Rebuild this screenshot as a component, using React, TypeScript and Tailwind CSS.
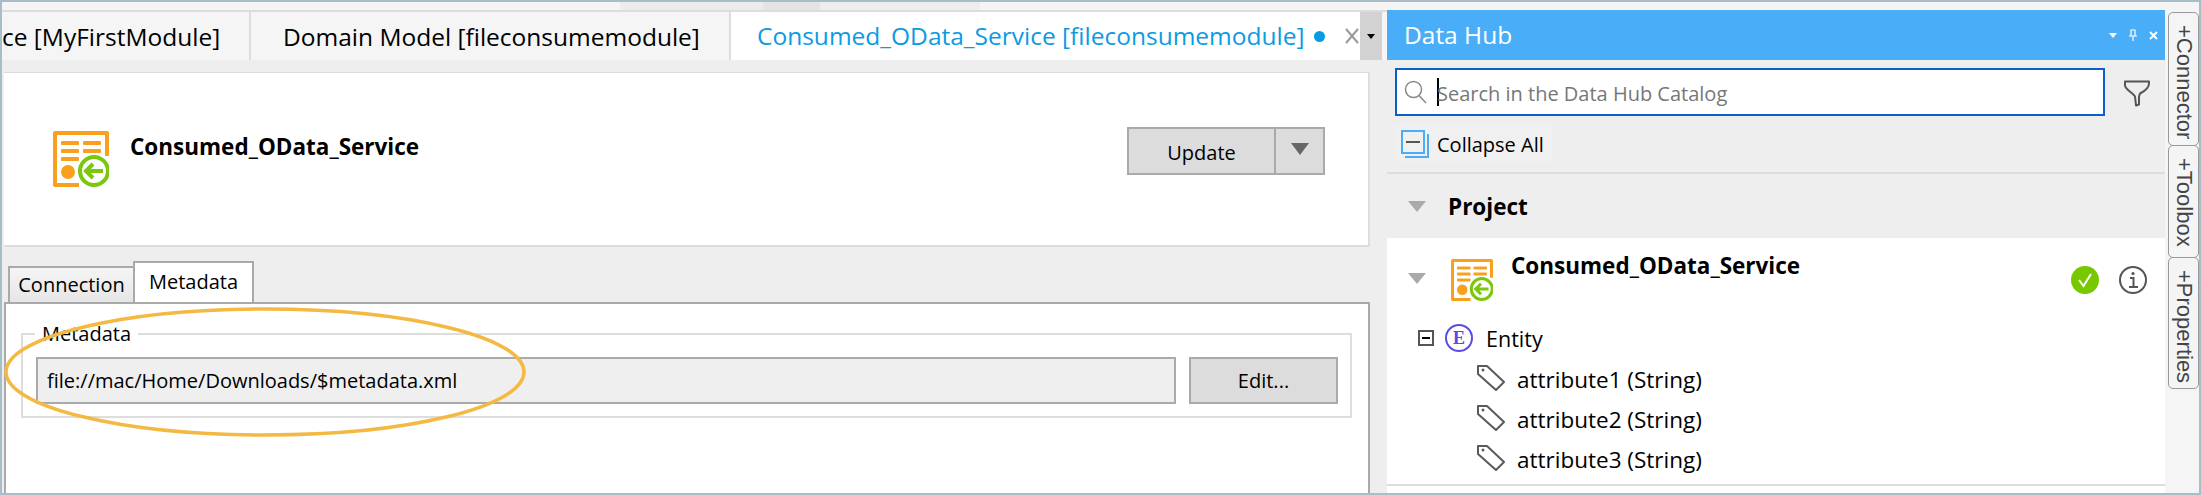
const SANS = "font-['Open_Sans','Noto_Sans',sans-serif]";

function ServiceIcon({ size }: { size: number }) {
  return (
    <svg width={size} height={size} viewBox="0 0 56 56" className="shrink-0">
      <path d="M2 25V2h52v23M26 54H2V2" fill="none" stroke="#f9a11f" strokeWidth="4" strokeLinejoin="round" />
      <g fill="#f9a11f">
        <rect x="8" y="10" width="18" height="4" rx="1" />
        <rect x="30" y="10" width="18" height="4" rx="1" />
        <rect x="8" y="18" width="18" height="4" rx="1" />
        <rect x="30" y="18" width="18" height="4" rx="1" />
        <rect x="8" y="26" width="18" height="4" rx="1" />
        <circle cx="15" cy="41" r="7" />
      </g>
      <circle cx="41" cy="40" r="14" fill="#fff" stroke="#7ac70c" strokeWidth="4" />
      <path d="M50 40H33M40 33l-7 7 7 7" fill="none" stroke="#7ac70c" strokeWidth="4" />
    </svg>
  );
}

function Triangle() {
  return (
    <svg width="18" height="11" viewBox="0 0 18 11" className="shrink-0">
      <path d="M0 0h18L9 11z" fill="#aaa" />
    </svg>
  );
}

function TagIcon() {
  return (
    <svg width="28" height="26" viewBox="0 0 28 26" className="shrink-0">
      <path d="M1 1h9l17 16-8 8L1 9z" fill="none" stroke="#5a5a5a" strokeWidth="2" strokeLinejoin="round" />
      <circle cx="6" cy="5" r="1.5" fill="#5a5a5a" />
    </svg>
  );
}

function SideTab({ label, h }: { label: string; h: string }) {
  return (
    <div className={`${h} w-[31px] rounded-[5px] border border-[#999] bg-[#f5f5f5] flex justify-center pt-[12px] -mb-px`}>
      <span className="[writing-mode:vertical-rl] font-['Liberation_Sans',sans-serif] text-[22px] leading-[30px] text-[#444]">{label}</span>
    </div>
  );
}

function AttrRow({ label }: { label: string }) {
  return (
    <div className="flex h-[40px] items-center gap-[12px] pl-[90px]">
      <TagIcon />
      <span className="pt-[4px] text-[22.5px] text-black">{label}</span>
    </div>
  );
}

export default function App() {
  return (
    <div className={`${SANS} flex h-[495px] w-[2201px] flex-col overflow-hidden border-y-2 border-x-2 border-[#a7bdca] bg-[#f5f5f5]`}>
      {/* window top strip */}
      <div className="flex h-[8px] shrink-0">
        <div className="w-[618px]" />
        <div className="w-[143px] bg-[#ececec]" />
        <div className="w-[57px] bg-[#e4e4e4]" />
        <div className="w-[160px] bg-[#eeeeee]" />
      </div>

      <div className="flex min-h-0 flex-1">
        {/* editor */}
        <div className="flex w-[1385px] shrink-0 flex-col">
          <div className="flex h-[50px] shrink-0 border-t-2 border-[#ddd] bg-[#f5f5f5] text-[24.5px] leading-[50px]">
            <div className="w-[249px] shrink-0 overflow-hidden border-r-2 border-[#ddd] text-right">
              <span className="block whitespace-nowrap pr-[31px] text-black">ce [MyFirstModule]</span>
            </div>
            <div className="w-[478px] shrink-0 pl-[32px] text-black whitespace-nowrap">Domain Model [fileconsumemodule]</div>
            <div className="flex w-[631px] shrink-0 items-center border-l-2 border-[#ddd] bg-white pl-[26px] text-[#0b9be3]">
              <span className="whitespace-nowrap">Consumed_OData_Service [fileconsumemodule]</span>
              <span className="ml-[10px] h-[11px] w-[11px] shrink-0 rounded-full bg-[#0b9be3]" />
              <svg width="14" height="16" viewBox="0 0 14 16" className="ml-[20px] shrink-0">
                <path d="M1 1l12 14M13 1L1 15" stroke="#999" strokeWidth="2" />
              </svg>
            </div>
            <div className="flex w-[22px] shrink-0 items-center justify-center bg-[#d2d2d2]">
              <svg width="8" height="5" viewBox="0 0 8 5">
                <path d="M0 0h8L4 5z" fill="#000" />
              </svg>
            </div>
          </div>

          <div className="flex min-h-0 flex-1 flex-col bg-[#eeeeee] pl-[2px] pr-[17px] pt-[12px]">
            {/* service header card */}
            <div className="flex h-[175px] shrink-0 border-y border-r-2 border-y-[#ddd] border-r-[#ddd] border-b-2 bg-white">
              <div className="ml-[49px] mt-[58px]">
                <ServiceIcon size={56} />
              </div>
              <div className="ml-[21px] mt-[60px] text-[22.5px] font-bold leading-[28px] text-black">Consumed_OData_Service</div>
              <div className="ml-auto mr-[43px] mt-[54px] flex h-[48px] border-2 border-[#aaa] bg-[#dcdcdc]">
                <div className="flex w-[147px] items-center justify-center border-r-2 border-[#aaa] pt-[4px] text-[20px] text-black">Update</div>
                <div className="flex w-[47px] items-center justify-center pb-[4px]">
                  <svg width="18" height="12" viewBox="0 0 18 12">
                    <path d="M0 0h18L9 12z" fill="#666" />
                  </svg>
                </div>
              </div>
            </div>

            {/* tabs */}
            <div className="ml-[4px] mt-[13px] flex h-[42px] shrink-0 items-end">
              <div className="flex h-[36px] w-[127px] items-center justify-center border-2 border-b-0 border-[#aaa] bg-gradient-to-b from-[#f5f5f5] to-[#e6e6e6] text-[20px] text-black">Connection</div>
              <div className="-ml-[2px] -mb-[2px] relative flex h-[43px] w-[121px] items-start justify-center border-2 border-b-0 border-[#aaa] bg-white pt-[4px] text-[20px] text-black">Metadata</div>
            </div>

            <div className="relative min-h-0 flex-1 border-x-2 border-t-2 border-[#aaa] bg-white">
              <fieldset className="ml-[15px] mr-[16px] mt-[16px] border-2 border-[#ddd] pb-[12px] pl-[13px] pr-[12px]">
                <legend className="-ml-px px-[7px] text-[20px] leading-[28px] text-black">Metadata</legend>
                <div className="mt-[9px] flex gap-[13px]">
                  <div className="flex h-[47px] flex-1 items-center border-2 border-[#aaa] bg-[#efefef] pl-[9px] text-[20px] text-black">file://mac/Home/Downloads/$metadata.xml</div>
                  <div className="flex h-[47px] w-[149px] items-center justify-center border-2 border-[#aaa] bg-[#dcdcdc] text-[20px] text-black">Edit...</div>
                </div>
              </fieldset>
              {/* annotation ellipse over the field */}
              <svg width="522" height="130" viewBox="0 0 522 130" className="absolute -left-[2px] top-[3px]">
                <ellipse cx="261" cy="65" rx="259" ry="63" fill="none" stroke="#f4b942" strokeWidth="3.5" />
              </svg>
            </div>
          </div>
        </div>

        {/* data hub panel */}
        <div className="flex w-[778px] shrink-0 flex-col bg-[#eeeeee]">
          <div className="flex h-[50px] shrink-0 items-center bg-[#49aef7] pl-[17px] pr-[7px] text-[24.5px] text-white">
            <span>Data Hub</span>
            <svg width="8" height="5" viewBox="0 0 8 5" className="ml-auto">
              <path d="M0 0h8L4 5z" fill="#fff" />
            </svg>
            <svg width="8" height="12" viewBox="0 0 8 12" className="ml-[12px]">
              <path d="M2 1h4v6H2zM0 7h8M4 7v5" fill="none" stroke="#fff" strokeWidth="1.2" />
            </svg>
            <svg width="9" height="9" viewBox="0 0 9 9" className="ml-[12px]">
              <path d="M1 1l7 7M8 1L1 8" stroke="#fff" strokeWidth="2" />
            </svg>
          </div>

          <div className="flex h-[64px] shrink-0 items-start pl-[8px] pt-[8px]">
            <div className="flex h-[48px] w-[710px] items-center border-2 border-[#0a5fc9] bg-white pl-[7px]">
              <svg width="23" height="24" viewBox="0 0 23 24" className="shrink-0">
                <circle cx="9.5" cy="9.5" r="8" fill="none" stroke="#888" strokeWidth="1.5" />
                <path d="M15 15.5l7 7.5" stroke="#888" strokeWidth="1.5" />
              </svg>
              <div className="ml-[10px] h-[28px] w-[2px] shrink-0 bg-black" />
              <span className="-ml-[2px] pt-[3px] text-[20px] text-[#777]">Search in the Data Hub Catalog</span>
            </div>
            <svg width="26" height="27" viewBox="0 0 26 27" className="ml-[19px] mt-[12px] shrink-0">
              <path d="M1 1.5h24v2c0 4-5 8-9 10l-1 3v8l-3 1-1-9c-1-3-10-7-10-11z" fill="none" stroke="#555" strokeWidth="2" strokeLinejoin="round" />
            </svg>
          </div>

          <div className="flex h-[50px] shrink-0 items-start border-b-2 border-[#ddd] pl-[8px]">
            <div className="mt-px flex h-[37px] w-[158px] items-center bg-[#f0f0f0] pl-[6px]">
              <svg width="28" height="28" viewBox="0 0 28 28" className="shrink-0">
                <rect x="1" y="1" width="22" height="22" fill="none" stroke="#49aef7" strokeWidth="2" />
                <path d="M27 4v23H4" fill="none" stroke="#49aef7" strokeWidth="2" />
                <path d="M5 12h14" stroke="#555" strokeWidth="2" />
              </svg>
              <span className="ml-[8px] pt-[2px] text-[20px] text-black">Collapse All</span>
            </div>
          </div>

          <div className="flex h-[64px] shrink-0 items-center pl-[21px]">
            <Triangle />
            <span className="ml-[22px] pt-[2px] text-[22.5px] font-bold text-black">Project</span>
          </div>

          {/* tree */}
          <div className="flex min-h-0 flex-1 flex-col bg-white">
            <div className="flex h-[80px] shrink-0 pl-[21px]">
              <div className="mt-[35px]">
                <Triangle />
              </div>
              <div className="ml-[25px] mt-[21px]">
                <ServiceIcon size={42} />
              </div>
              <div className="ml-[18px] mt-[14px] text-[22.5px] font-bold leading-[28px] text-black">Consumed_OData_Service</div>
              <div className="ml-auto mr-[18px] mt-[28px] flex gap-[20px]">
                <svg width="28" height="28" viewBox="0 0 28 28">
                  <circle cx="14" cy="14" r="14" fill="#78c800" />
                  <path d="M8 14l4.5 6L20 8" fill="none" stroke="#fff" strokeWidth="2" />
                </svg>
                <svg width="28" height="28" viewBox="0 0 28 28">
                  <circle cx="14" cy="14" r="13" fill="none" stroke="#555" strokeWidth="2" />
                  <path d="M11 12h3.5v9M10 21h9" fill="none" stroke="#555" strokeWidth="2" />
                  <circle cx="14" cy="7.5" r="1.6" fill="#555" />
                </svg>
              </div>
            </div>
            <div className="flex h-[40px] shrink-0 items-center pl-[31px]">
              <div className="flex h-[16px] w-[16px] items-center justify-center border-2 border-[#555]">
                <div className="h-[2px] w-[8px] bg-black" />
              </div>
              <div className="ml-[11px] flex h-[28px] w-[28px] items-center justify-center rounded-full border-2 border-[#5b4be6] font-['Liberation_Serif',serif] text-[18px] font-bold text-[#5b4be6]">E</div>
              <span className="ml-[13px] pt-[2px] text-[21.5px] text-black">Entity</span>
            </div>
            <AttrRow label="attribute1 (String)" />
            <AttrRow label="attribute2 (String)" />
            <AttrRow label="attribute3 (String)" />
            <div className="mt-auto mb-[7px] h-[2px] bg-[#ddd]" />
          </div>
        </div>

        {/* docked side tabs */}
        <div className="flex w-[34px] shrink-0 flex-col pl-[3px] pt-[2px]">
          <SideTab label="+Connector" h="h-[134px]" />
          <SideTab label="+Toolbox" h="h-[113px]" />
          <SideTab label="+Properties" h="h-[132px]" />
        </div>
      </div>
    </div>
  );
}
